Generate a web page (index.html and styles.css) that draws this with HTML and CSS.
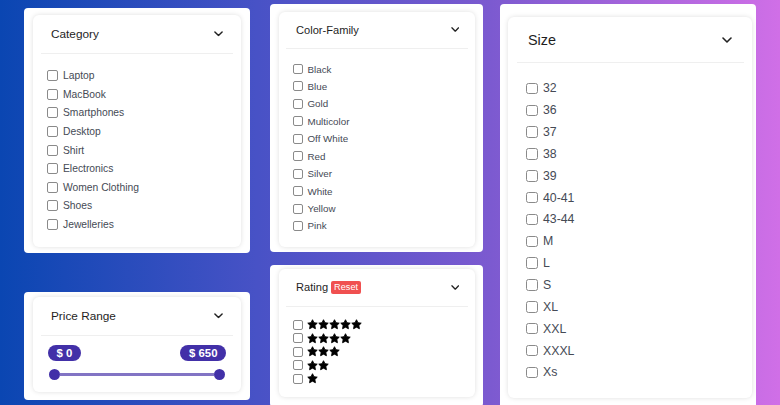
FILE: index.html
```html
<!DOCTYPE html>
<html lang="en">
<head>
<meta charset="utf-8">
<title>Filters</title>
<link rel="stylesheet" href="styles.css">
</head>
<body>
<svg class="defs" width="0" height="0" aria-hidden="true">
  <defs>
    <symbol id="star" viewBox="0 0 24 24"><path d="M12 1.6l3.2 6.5 7.1 1-5.2 5 1.3 7.1L12 17.8l-6.4 3.4 1.3-7.1-5.2-5 7.1-1z" stroke="#000" stroke-width="2" stroke-linejoin="round"/></symbol>
    <symbol id="chev" viewBox="0 0 10 6"><polyline points="1,1 5,5 9,1" fill="none" stroke="#222" stroke-width="1.6" stroke-linecap="round" stroke-linejoin="round"/></symbol>
  </defs>
</svg>
<div class="page">
  <div class="col col-1">
    <section class="panel p-cat">
      <div class="card">
        <div class="head"><span class="title">Category</span><svg class="chev"><use href="#chev"/></svg></div>
        <ul class="list">
          <li><input type="checkbox" class="box">Laptop</li>
          <li><input type="checkbox" class="box">MacBook</li>
          <li><input type="checkbox" class="box">Smartphones</li>
          <li><input type="checkbox" class="box">Desktop</li>
          <li><input type="checkbox" class="box">Shirt</li>
          <li><input type="checkbox" class="box">Electronics</li>
          <li><input type="checkbox" class="box">Women Clothing</li>
          <li><input type="checkbox" class="box">Shoes</li>
          <li><input type="checkbox" class="box">Jewelleries</li>
        </ul>
      </div>
    </section>
    <section class="panel p-price">
      <div class="card">
        <div class="head"><span class="title">Price Range</span><svg class="chev"><use href="#chev"/></svg></div>
        <div class="price">
          <div class="badges"><span class="pill">$ 0</span><span class="pill">$ 650</span></div>
          <div class="slider"><span class="thumb"></span><span class="track"></span><span class="thumb"></span></div>
        </div>
      </div>
    </section>
  </div>

  <div class="col col-2">
    <section class="panel p-color">
      <div class="card">
        <div class="head"><span class="title">Color-Family</span><svg class="chev"><use href="#chev"/></svg></div>
        <ul class="list">
          <li><input type="checkbox" class="box">Black</li>
          <li><input type="checkbox" class="box">Blue</li>
          <li><input type="checkbox" class="box">Gold</li>
          <li><input type="checkbox" class="box">Multicolor</li>
          <li><input type="checkbox" class="box">Off White</li>
          <li><input type="checkbox" class="box">Red</li>
          <li><input type="checkbox" class="box">Silver</li>
          <li><input type="checkbox" class="box">White</li>
          <li><input type="checkbox" class="box">Yellow</li>
          <li><input type="checkbox" class="box">Pink</li>
        </ul>
      </div>
    </section>
    <section class="panel p-rating">
      <div class="card">
        <div class="head"><span class="title">Rating <span class="reset">Reset</span></span><svg class="chev"><use href="#chev"/></svg></div>
        <ul class="list stars-list">
          <li><input type="checkbox" class="box"><span class="stars"><svg><use href="#star"/></svg><svg><use href="#star"/></svg><svg><use href="#star"/></svg><svg><use href="#star"/></svg><svg><use href="#star"/></svg></span></li>
          <li><input type="checkbox" class="box"><span class="stars"><svg><use href="#star"/></svg><svg><use href="#star"/></svg><svg><use href="#star"/></svg><svg><use href="#star"/></svg></span></li>
          <li><input type="checkbox" class="box"><span class="stars"><svg><use href="#star"/></svg><svg><use href="#star"/></svg><svg><use href="#star"/></svg></span></li>
          <li><input type="checkbox" class="box"><span class="stars"><svg><use href="#star"/></svg><svg><use href="#star"/></svg></span></li>
          <li><input type="checkbox" class="box"><span class="stars"><svg><use href="#star"/></svg></span></li>
        </ul>
      </div>
    </section>
  </div>

  <div class="col col-3">
    <section class="panel p-size">
      <div class="card">
        <div class="head"><span class="title">Size</span><svg class="chev"><use href="#chev"/></svg></div>
        <ul class="list">
          <li><input type="checkbox" class="box">32</li>
          <li><input type="checkbox" class="box">36</li>
          <li><input type="checkbox" class="box">37</li>
          <li><input type="checkbox" class="box">38</li>
          <li><input type="checkbox" class="box">39</li>
          <li><input type="checkbox" class="box">40-41</li>
          <li><input type="checkbox" class="box">43-44</li>
          <li><input type="checkbox" class="box">M</li>
          <li><input type="checkbox" class="box">L</li>
          <li><input type="checkbox" class="box">S</li>
          <li><input type="checkbox" class="box">XL</li>
          <li><input type="checkbox" class="box">XXL</li>
          <li><input type="checkbox" class="box">XXXL</li>
          <li><input type="checkbox" class="box">Xs</li>
        </ul>
      </div>
    </section>
  </div>
</div>
</body>
</html>
```

FILE: styles.css
```css
html, body {
  margin: 0;
  padding: 0;
  height: 405px;
  overflow: hidden;
}
body {
  background: linear-gradient(to right, #0a46b2 0%, #4852c6 33%, #7c5ad0 63%, #d06fe7 100%);
  font-family: "Liberation Sans", Arial, sans-serif;
}
.defs { position: absolute; width: 0; height: 0; }

.page {
  display: flex;
  align-items: flex-start;
  padding-left: 24px;
}
.col {
  display: flex;
  flex-direction: column;
}
.col-1 { width: 226px; margin-top: 8px; gap: 39px; }
.col-2 { width: 213px; margin-top: 4px; gap: 13px; margin-left: 20px; }
.col-3 { width: 256px; margin-top: 4px; margin-left: 17px; }

.panel {
  background: #fff;
  border-radius: 4px;
}
.card {
  background: #fff;
  border-radius: 6px;
  box-shadow: 0 0 5px rgba(0, 0, 0, 0.13);
}

.p-cat { padding: 7px 9px 6px 9px; }
.p-price { padding: 5px 9px 8px 9px; }
.p-color { padding: 8px 8px 5px 9px; }
.p-rating { padding: 4px 8px 10px 9px; }
.p-size { padding: 13px 4px 12px 8px; }

.head {
  display: flex;
  align-items: center;
  justify-content: space-between;
  border-bottom: 1px solid #efefef;
  color: #1e1e1e;
}
.title { display: flex; align-items: center; }
.chev { display: block; }

.list {
  list-style: none;
  margin: 0;
  color: #454a55;
}
.list li {
  display: flex;
  align-items: center;
}
.box {
  appearance: none;
  -webkit-appearance: none;
  margin: 0;
  flex: none;
  background: #fff;
  border: 1px solid #8a8a8a;
  border-radius: 2px;
  box-sizing: border-box;
}

/* column 1 scale */
.col-1 .head { height: 38px; margin: 0 8px; padding: 0 10px; font-size: 11.8px; }
.col-1 .chev { width: 9px; height: 5.5px; }
.col-1 .list { padding: 12.5px 0 13.1px 14px; font-size: 10.3px; }
.col-1 .list li { height: 18.6px; }
.col-1 .box { width: 11px; height: 11px; margin-right: 5px; }

/* column 2 scale */
.col-2 .head { margin: 0 7px; padding: 0 9px 0 10px; font-size: 11.1px; }
.p-color .head { height: 35.5px; }
.p-rating .head { height: 37px; }
.col-2 .chev { width: 8.5px; height: 5px; }
.col-2 .list { padding: 11.8px 0 12.3px 14px; font-size: 9.8px; }
.col-2 .list li { height: 17.44px; }
.col-2 .box { width: 10px; height: 10px; margin-right: 4.5px; }
.col-2 .stars-list { padding: 11.25px 0 11.25px 14px; }
.col-2 .stars-list li { height: 13.5px; }
.col-2 .stars-list .box { margin-right: 4px; }

.reset {
  display: inline-block;
  margin-left: 3px;
  padding: 0 3px;
  height: 13px;
  line-height: 13px;
  font-size: 9.2px;
  color: #fff;
  background: #f05050;
  border-radius: 2px;
}
.stars {
  display: flex;
}
.stars svg {
  width: 11px;
  height: 11px;
  display: block;
}

/* column 3 scale */
.col-3 .head { height: 45px; margin: 0 8px 0 9px; padding: 0 12px 0 11px; font-size: 14.4px; }
.col-3 .chev { width: 10px; height: 6px; }
.col-3 .list { padding: 14.5px 0 14.5px 18px; font-size: 12.3px; }
.col-3 .list li { height: 21.85px; }
.col-3 .box { width: 11.5px; height: 11.5px; margin-right: 5.5px; border-radius: 2.5px; }

/* price range */
.price { padding: 9px 15px 11.5px 15px; }
.badges {
  display: flex;
  justify-content: space-between;
}
.pill {
  height: 16px;
  line-height: 16px;
  padding: 0 8.5px;
  border-radius: 8px;
  background: #4230a8;
  color: #fff;
  font-size: 11.4px;
  font-weight: bold;
}
.slider {
  display: flex;
  align-items: center;
  margin-top: 8.5px;
  padding: 0 1px 0 0.5px;
}
.thumb {
  width: 11px;
  height: 11px;
  border-radius: 50%;
  background: #4230a8;
  flex: none;
}
.track {
  flex: 1;
  height: 3px;
  background: #8274c4;
}
```
